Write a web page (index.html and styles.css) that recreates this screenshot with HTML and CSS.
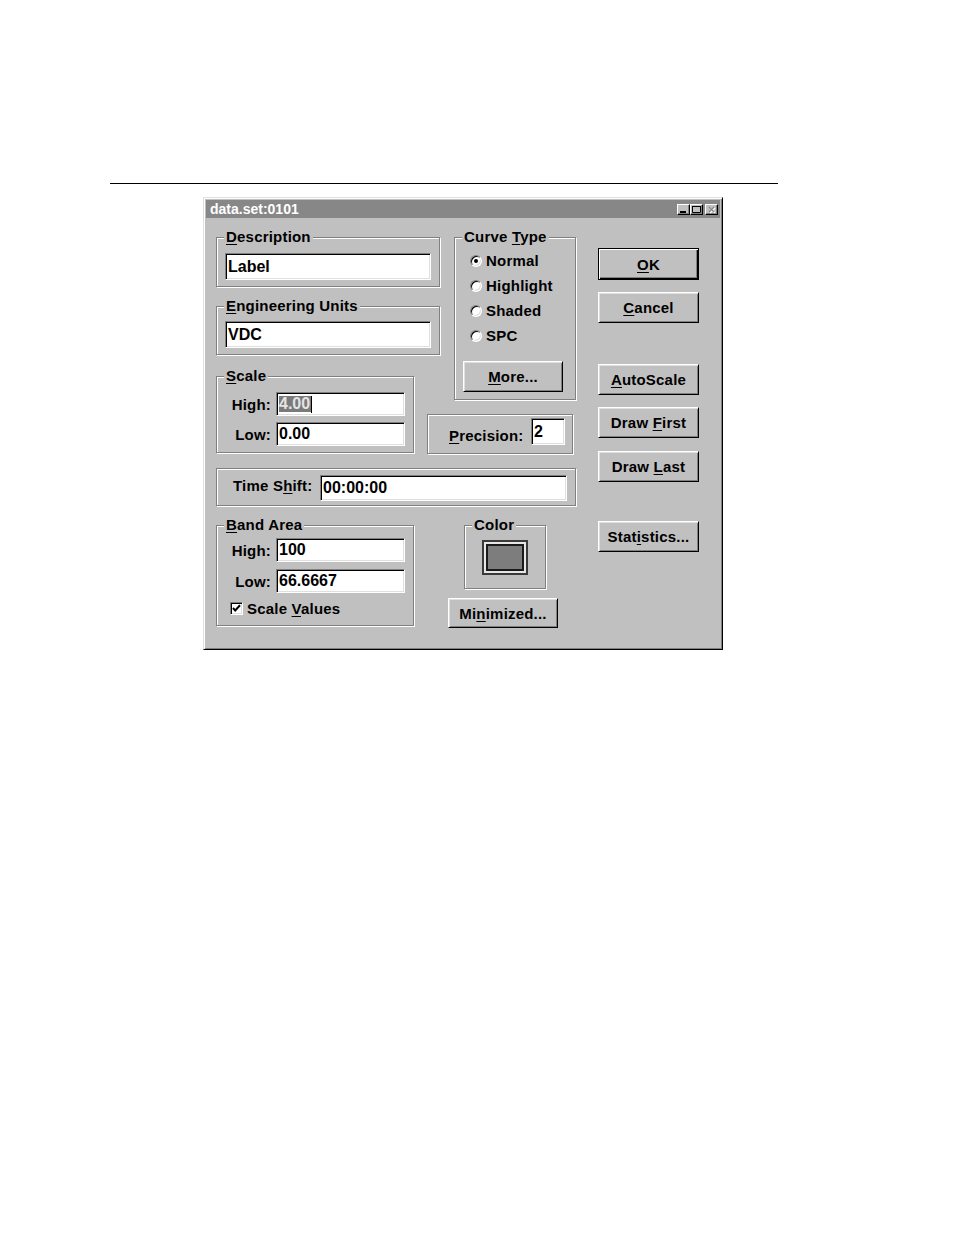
FILE: index.html
```html
<!DOCTYPE html>
<html>
<head>
<meta charset="utf-8">
<title>data.set:0101</title>
<link rel="stylesheet" href="styles.css">
</head>
<body>
<div class="page">
  <div class="rule"></div>
  <div class="dialog">
    <div class="titlebar">
      <span class="title">data.set:0101</span>
      <div class="tb-buttons">
        <span class="tb-btn"><svg width="11" height="9" viewBox="0 0 11 9"><rect x="2" y="6" width="6" height="2" fill="#000"/></svg></span>
        <span class="tb-btn"><svg width="11" height="9" viewBox="0 0 11 9"><path d="M1.5 1.5h8v6h-8z" fill="none" stroke="#000"/><path d="M1 1.5h9" stroke="#000" stroke-width="1"/></svg></span>
        <span class="tb-btn tb-close"><svg width="11" height="9" viewBox="0 0 11 9"><path d="M3 2l5 5M8 2l-5 5" stroke="#fff" stroke-width="1.3" transform="translate(1 1)"/><path d="M3 2l5 5M8 2l-5 5" stroke="#8a8a8a" stroke-width="1.3"/></svg></span>
      </div>
    </div>
    <div class="client">
      <div class="left">
        <div class="group g-desc">
          <span class="legend"><u>D</u>escription</span>
          <div class="field f-wide">Label</div>
        </div>
        <div class="group g-eng">
          <span class="legend"><u>E</u>ngineering Units</span>
          <div class="field f-wide">VDC</div>
        </div>
        <div class="group g-curve">
          <span class="legend">Curve <u>T</u>ype</span>
          <div class="radio-list">
            <div class="radio-row"><span class="radio checked"></span>Normal</div>
            <div class="radio-row"><span class="radio"></span>Highlight</div>
            <div class="radio-row"><span class="radio"></span>Shaded</div>
            <div class="radio-row"><span class="radio"></span>SPC</div>
          </div>
          <div class="btn btn-more"><span><u>M</u>ore...</span></div>
        </div>
        <div class="group g-scale">
          <span class="legend"><u>S</u>cale</span>
          <div class="lrow"><span class="lab">High:</span><div class="field f-num"><span class="sel">4.00</span><span class="caret"></span></div></div>
          <div class="lrow"><span class="lab">Low:</span><div class="field f-num">0.00</div></div>
        </div>
        <div class="group g-prec">
          <span class="plab"><u>P</u>recision:</span>
          <div class="field f-prec">2</div>
        </div>
        <div class="group g-time">
          <span class="tlab">Time S<u>h</u>ift:</span>
          <div class="field f-time">00:00:00</div>
        </div>
        <div class="group g-band">
          <span class="legend"><u>B</u>and Area</span>
          <div class="lrow"><span class="lab">High:</span><div class="field f-num">100</div></div>
          <div class="lrow"><span class="lab">Low:</span><div class="field f-num">66.6667</div></div>
          <div class="crow">
            <span class="check"><svg width="11" height="11" viewBox="0 0 11 11"><path d="M2 5l2.2 2.4L9 2.2" fill="none" stroke="#000" stroke-width="2"/></svg></span>
            <span>Scale <u>V</u>alues</span>
          </div>
        </div>
        <div class="color-col">
          <div class="group g-color">
            <span class="legend">Color</span>
            <div class="swatch"><div class="swatch-fill"></div></div>
          </div>
          <div class="btn btn-min"><span>Mi<u>n</u>imized...</span></div>
        </div>
      </div>
      <div class="right">
        <div class="btn btn-default b-ok"><span><u>O</u>K</span></div>
        <div class="btn b-cancel"><span><u>C</u>ancel</span></div>
        <div class="btn b-auto"><span><u>A</u>utoScale</span></div>
        <div class="btn b-first"><span>Draw <u>F</u>irst</span></div>
        <div class="btn b-last"><span>Draw <u>L</u>ast</span></div>
        <div class="btn b-stats"><span>Stat<u>i</u>stics...</span></div>
      </div>
    </div>
  </div>
</div>
</body>
</html>
```

FILE: styles.css
```css
* {
  box-sizing: border-box;
}

html, body {
  margin: 0;
  padding: 0;
  background: #fff;
}

body {
  font-family: "Liberation Sans", Arial, sans-serif;
  font-weight: bold;
  font-size: 15px;
  letter-spacing: 0.2px;
  color: #000;
}

.page {
  padding-top: 183px;
  width: 954px;
  height: 1235px;
}

.rule {
  margin-left: 110px;
  width: 668px;
  height: 1px;
  background: #000;
}

.dialog {
  margin-top: 13px;
  margin-left: 203px;
  width: 520px;
  height: 453px;
  background: #c0c0c0;
  border: 1px solid;
  border-color: #dfdfdf #000 #000 #dfdfdf;
  box-shadow: inset 1px 1px 0 #fff, inset -1px -1px 0 #808080;
  padding: 2px;
}

.titlebar {
  height: 18px;
  background: #878787;
  display: flex;
  align-items: center;
  padding: 0 2px 0 4px;
}

.title {
  color: #fff;
  font-size: 14px;
  letter-spacing: 0;
  line-height: 18px;
  flex: 1;
}

.tb-buttons {
  display: flex;
  align-items: center;
}

.tb-btn {
  width: 13px;
  height: 11px;
  background: #c0c0c0;
  border: 1px solid;
  border-color: #fff #000 #000 #fff;
  box-shadow: inset -1px -1px 0 #808080;
  display: flex;
}

.tb-btn svg {
  display: block;
}

.tb-close {
  margin-left: 2px;
}

.client {
  display: flex;
  align-items: flex-start;
  padding: 19px 0 0 10px;
}

.left {
  width: 360px;
  display: grid;
  grid-template-columns: 198px 13px 13px 14px 122px;
  grid-template-rows: 69px 70px 38px 54px 57px auto;
  align-items: start;
  justify-items: start;
}

.group {
  position: relative;
  border: 1px solid #808080;
  box-shadow: 1px 1px 0 #fff, inset 1px 1px 0 #fff;
}

.legend {
  position: absolute;
  top: -9px;
  left: 7px;
  padding: 0 2px;
  line-height: 15px;
  background: #c0c0c0;
  white-space: nowrap;
}

u {
  text-decoration: underline;
  text-underline-offset: 2px;
  text-decoration-thickness: 1px;
}

.field {
  background: #fff;
  border: 1px solid;
  border-color: #808080 #fff #fff #808080;
  box-shadow: inset 1px 1px 0 #000, inset -1px -1px 0 #dfdfdf;
  display: flex;
  align-items: center;
  padding-left: 2px;
  font-size: 16px;
  letter-spacing: 0;
  white-space: nowrap;
}

.g-desc {
  grid-column: 1 / 4;
  grid-row: 1;
  width: 224px;
  height: 50px;
  padding: 15px 0 0 8px;
}

.g-eng {
  grid-column: 1 / 4;
  grid-row: 2;
  width: 224px;
  height: 49px;
  padding: 14px 0 0 8px;
}

.f-wide {
  width: 206px;
  height: 27px;
}

.g-curve {
  grid-column: 5 / 6;
  grid-row: 1 / 4;
  width: 122px;
  height: 163px;
  padding: 10px 0 0 8px;
}

.radio-list {
  padding-left: 7px;
}

.radio-row {
  height: 25px;
  line-height: 25px;
  display: flex;
  align-items: center;
}

.radio {
  width: 12px;
  height: 12px;
  border-radius: 50%;
  background: #fff;
  border: 1px solid;
  border-color: #808080 #fff #fff #808080;
  box-shadow: inset 1px 1px 0 #000, inset -1px -1px 0 #dfdfdf;
  margin-right: 4px;
  display: flex;
  align-items: center;
  justify-content: center;
}

.radio.checked::after {
  content: "";
  width: 4px;
  height: 4px;
  border-radius: 50%;
  background: #000;
}

.btn {
  background: #c0c0c0;
  border: 1px solid;
  border-color: #fff #000 #000 #fff;
  box-shadow: inset 1px 1px 0 #dfdfdf, inset -1px -1px 0 #808080;
  display: flex;
  align-items: center;
  justify-content: center;
  white-space: nowrap;
  line-height: 15px;
}

.btn-default {
  border-color: #000;
  box-shadow: inset 1px 1px 0 #fff, inset -1px -1px 0 #000, inset -2px -2px 0 #808080;
}

.btn-more {
  margin-top: 13px;
  width: 100px;
  height: 31px;
}

.g-scale {
  grid-column: 1 / 2;
  grid-row: 3 / 5;
  width: 198px;
  height: 77px;
  padding-top: 15px;
}

.lrow {
  display: flex;
  align-items: center;
}

.g-scale .lrow + .lrow {
  margin-top: 6px;
}

.g-band .lrow + .lrow {
  margin-top: 7px;
}

.lab {
  width: 54px;
  text-align: right;
  line-height: 15px;
}

.f-num {
  margin-left: 5px;
  width: 129px;
  height: 24px;
}

.sel {
  background: #7a7a7a;
  color: #e4e4e4;
  line-height: 16px;
  padding: 0 1px 0 0;
}

.caret {
  width: 1px;
  height: 17px;
  background: #000;
}

.g-prec {
  grid-column: 3 / 6;
  grid-row: 4;
  width: 146px;
  height: 40px;
  display: flex;
  align-items: flex-start;
  padding: 3px 7px 0 21px;
}

.plab {
  margin-top: 10px;
  line-height: 15px;
}

.f-prec {
  margin-left: auto;
  width: 34px;
  height: 27px;
}

.g-time {
  grid-column: 1 / 6;
  grid-row: 5;
  width: 360px;
  height: 38px;
  display: flex;
  align-items: flex-start;
  padding: 6px 8px 0 16px;
}

.tlab {
  margin-top: 3px;
  line-height: 15px;
}

.f-time {
  margin-left: auto;
  width: 247px;
  height: 26px;
}

.g-band {
  grid-column: 1 / 2;
  grid-row: 6;
  width: 198px;
  height: 101px;
  padding-top: 12px;
}

.crow {
  display: flex;
  align-items: center;
  line-height: 15px;
  margin-top: 8px;
  padding-left: 13px;
}

.check {
  width: 13px;
  height: 13px;
  background: #fff;
  border: 1px solid;
  border-color: #808080 #fff #fff #808080;
  box-shadow: inset 1px 1px 0 #000, inset -1px -1px 0 #dfdfdf;
  margin-right: 4px;
  display: flex;
  align-items: center;
  justify-content: center;
}

.check svg {
  display: block;
}

.color-col {
  grid-column: 2 / 6;
  grid-row: 6;
  display: flex;
  flex-direction: column;
  align-items: flex-start;
}

.g-color {
  margin-left: 50px;
  width: 82px;
  height: 64px;
  padding: 14px 0 0 17px;
}

.swatch {
  width: 46px;
  height: 35px;
  border: 2px solid #3a3a3a;
  padding: 2px;
  background: #e6e6e6;
}

.swatch-fill {
  width: 100%;
  height: 100%;
  border: 2px solid #1a1a1a;
  background: #7d7d7d;
}

.btn-min {
  margin: 9px 0 0 34px;
  width: 110px;
  height: 30px;
}

.right {
  margin: 11px 0 0 22px;
  display: flex;
  flex-direction: column;
}

.right .btn {
  width: 101px;
  height: 31px;
}

.right .b-ok {
  height: 32px;
}

.b-cancel {
  margin-top: 12px;
}

.b-auto {
  margin-top: 41px;
}

.b-first {
  margin-top: 12px;
}

.b-last {
  margin-top: 13px;
}

.b-stats {
  margin-top: 39px;
}
```
